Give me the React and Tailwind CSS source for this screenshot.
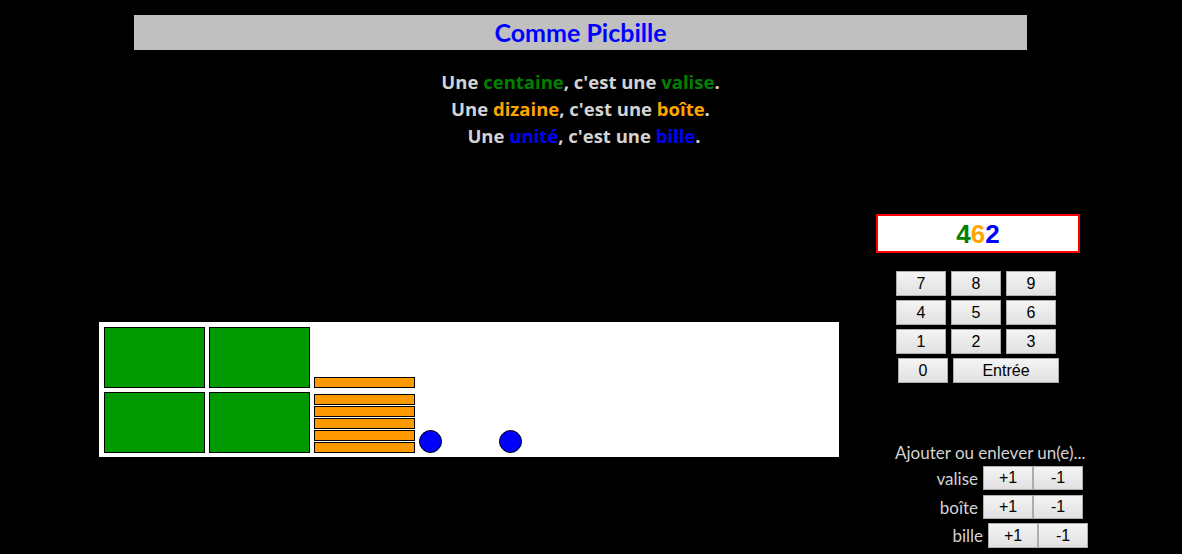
import React from "react";

const comic = "font-['Lato','DejaVu_Sans',sans-serif]";
const open = "font-['Open_Sans','DejaVu_Sans',sans-serif]";
const arial = "font-['Liberation_Sans',Arial,sans-serif]";

function Btn({ children, w = "w-[50px]", h = "h-[25px]" }) {
  return (
    <button
      className={`${w} ${h} ${arial} text-[16px] text-black border border-[#adadad] bg-linear-to-b from-[#f4f4f4] to-[#e1e1e1] flex items-center justify-center leading-none p-0`}
    >
      {children}
    </button>
  );
}

function Centaine() {
  return <div className="w-[101px] h-[61px] bg-[#009900] border border-black" />;
}
function Dizaine() {
  return <div className="w-[101px] h-[11px] bg-[#ff9900] border border-black" />;
}
function Bille() {
  return <div className="w-[23px] h-[23px] rounded-full bg-[#0000ff] border border-black" />;
}

export default function App() {
  return (
    <div className="w-[1182px] h-[554px] bg-black overflow-hidden pt-[15px]">
      <div className="ml-[134px] w-[893px] h-[35px] bg-[#c0c0c0] flex items-center justify-center">
        <span className={`${comic} text-[25px] font-bold text-[#0000ff]`}>Comme Picbille</span>
      </div>

      <div className={`ml-[134px] w-[893px] mt-[18px] text-center ${open} text-[18.5px] font-bold leading-[27px] text-[#d3d3d3]`}>
        <div>
          Une <span className="text-[#008000]">centaine</span>, c'est une{" "}
          <span className="text-[#008000]">valise</span>.
        </div>
        <div>
          Une <span className="text-[#ffa500]">dizaine</span>, c'est une{" "}
          <span className="text-[#ffa500]">boîte</span>.
        </div>
        <div className="pl-[7px]">
          Une <span className="text-[#0000ff]">unité</span>, c'est une{" "}
          <span className="text-[#0000ff]">bille</span>.
        </div>
      </div>

      <div className="flex mt-[65px]">
        <div className="ml-[99px] mt-[108px] w-[740px] h-[135px] bg-white flex items-end gap-[4px] pl-[5px] pb-[4px]">
          <div className="grid grid-cols-2 gap-[4px]">
            <Centaine />
            <Centaine />
            <Centaine />
            <Centaine />
          </div>
          <div className="flex flex-col gap-[6px]">
            <Dizaine />
            <div className="flex flex-col gap-[1px]">
              <Dizaine />
              <Dizaine />
              <Dizaine />
              <Dizaine />
              <Dizaine />
            </div>
          </div>
          <div className="flex gap-[57px]">
            <Bille />
            <Bille />
          </div>
        </div>

        <div className="ml-[37px] w-[212px] flex flex-col">
          <div className="w-[204px] h-[39px] border-2 border-[#ff0000] bg-white flex items-center justify-center">
            <span className={`${arial} text-[26px] font-bold leading-none`}>
              <span className="text-[#008000]">4</span>
              <span className="text-[#ffa500]">6</span>
              <span className="text-[#0000ff]">2</span>
            </span>
          </div>

          <div className="mt-[18px] ml-[20px] grid grid-cols-[50px_50px_50px] gap-x-[5px] gap-y-[4px] w-[160px]">
            {["7", "8", "9", "4", "5", "6", "1", "2", "3"].map((k) => (
              <Btn key={k}>{k}</Btn>
            ))}
          </div>
          <div className="mt-[4px] ml-[22px] flex gap-[5px]">
            <Btn>0</Btn>
            <Btn w="w-[106px]">Entrée</Btn>
          </div>

          <div className={`mt-[60px] ml-[19px] ${comic} text-[17px] leading-[20px] text-[#d3d3d3] whitespace-nowrap`}>
            Ajouter ou enlever un(e)...
          </div>
          <div className={`${comic} text-[17px] leading-none text-[#d3d3d3] flex flex-col`}>
            <div className="mt-[3px] h-[24px] flex items-center justify-end mr-[5px]">
              <span className="mr-[5px]">valise</span>
              <Btn h="h-[24px]">+1</Btn>
              <Btn h="h-[24px]">-1</Btn>
            </div>
            <div className="mt-[5px] h-[24px] flex items-center justify-end mr-[5px]">
              <span className="mr-[5px]">boîte</span>
              <Btn h="h-[24px]">+1</Btn>
              <Btn h="h-[24px]">-1</Btn>
            </div>
            <div className="mt-[4px] h-[25px] flex items-center justify-end">
              <span className="mr-[5px]">bille</span>
              <Btn>+1</Btn>
              <Btn>-1</Btn>
            </div>
          </div>
        </div>
      </div>
    </div>
  );
}
